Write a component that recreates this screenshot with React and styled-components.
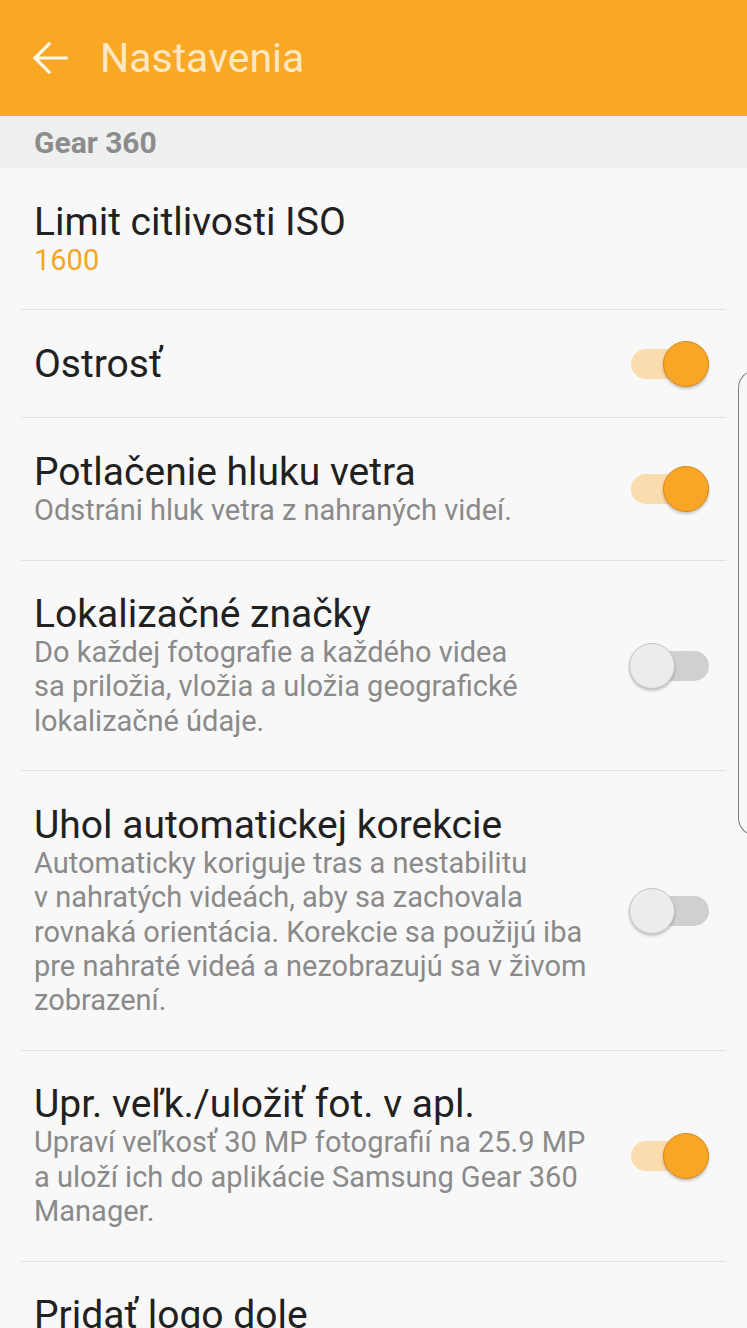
import React from 'react';
import styled, { createGlobalStyle } from 'styled-components';

const GlobalStyle = createGlobalStyle`
  html, body {
    margin: 0;
    padding: 0;
    background: #f8f8f8;
  }
  * {
    box-sizing: border-box;
    font-family: Roboto, "Noto Sans", sans-serif;
  }
`;

const Screen = styled.div`
  position: relative;
  width: 747px;
  height: 1328px;
  overflow: hidden;
  background: #f8f8f8;
`;

const AppBar = styled.header`
  height: 116px;
  background: #f9a825;
  display: flex;
  align-items: center;
  padding-left: 31px;
  gap: 31px;
`;

const Title = styled.h1`
  margin: 0;
  font-size: 41px;
  font-weight: 400;
  color: #fee8c4;
`;

const SectionHeader = styled.div`
  height: 52px;
  background: #eeefef;
  display: flex;
  align-items: center;
  padding-left: 34px;
  font-size: 30px;
  font-weight: 700;
  color: #8c8c8c;
`;

const List = styled.div`
  display: flex;
  flex-direction: column;
`;

const Row = styled.div`
  margin: 0 21px;
  padding: 32.5px 17px 32.5px 13px;
  display: flex;
  align-items: center;
  border-bottom: ${p => (p.last ? 'none' : '1.5px solid #e1e1e1')};
`;

const Texts = styled.div`
  flex: 1;
  display: flex;
  flex-direction: column;
`;

const ItemTitle = styled.div`
  font-size: 39px;
  line-height: 42px;
  color: #212121;
`;

const Sub = styled.div`
  font-size: 29px;
  line-height: 34.3px;
  color: ${p => (p.accent ? '#f5a623' : '#8a8a8a')};
`;

const Track = styled.div`
  position: relative;
  flex: none;
  margin-left: 20px;
  width: 78px;
  height: 30px;
  border-radius: 15px;
  background: ${p => (p.on ? '#fbdcae' : '#d0d0d0')};
`;

const Thumb = styled.div`
  position: absolute;
  top: -8px;
  left: ${p => (p.on ? '32px' : '-2px')};
  width: 46px;
  height: 46px;
  border-radius: 50%;
  background: ${p => (p.on ? '#f9a526' : '#ececec')};
  border: 1.5px solid ${p => (p.on ? '#d9891a' : '#c4c4c4')};
  box-shadow: 0 2px 3px rgba(0, 0, 0, 0.22);
`;

const EdgeHandle = styled.div`
  position: absolute;
  left: 738px;
  top: 370px;
  width: 40px;
  height: 466px;
  border: 1.5px solid #7d7d7d;
  border-right: none;
  border-radius: 18px 0 0 18px;
`;

const Toggle = ({ on }) => (
  <Track on={on ? 1 : 0}>
    <Thumb on={on ? 1 : 0} />
  </Track>
);

const BackArrow = () => (
  <svg width="38" height="38" viewBox="0 0 38 38" fill="none">
    <path d="M35 19H4M18 5L4 19l14 14" stroke="#fff6e8" strokeWidth="3.2" strokeLinecap="square" />
  </svg>
);

const items = [
  { title: 'Limit citlivosti ISO', value: '1600' },
  { title: 'Ostrosť', toggle: true, on: true },
  { title: 'Potlačenie hluku vetra', sub: ['Odstráni hluk vetra z nahraných videí.'], toggle: true, on: true },
  {
    title: 'Lokalizačné značky',
    sub: [
      'Do každej fotografie a každého videa',
      'sa priložia, vložia a uložia geografické',
      'lokalizačné údaje.',
    ],
    toggle: true,
    on: false,
  },
  {
    title: 'Uhol automatickej korekcie',
    sub: [
      'Automaticky koriguje tras a nestabilitu',
      'v nahratých videách, aby sa zachovala',
      'rovnaká orientácia. Korekcie sa použijú iba',
      'pre nahraté videá a nezobrazujú sa v živom',
      'zobrazení.',
    ],
    toggle: true,
    on: false,
  },
  {
    title: 'Upr. veľk./uložiť fot. v apl.',
    sub: [
      'Upraví veľkosť 30 MP fotografií na 25.9 MP',
      'a uloží ich do aplikácie Samsung Gear 360',
      'Manager.',
    ],
    toggle: true,
    on: true,
  },
  { title: 'Pridať logo dole', last: true },
];

export default function App() {
  return (
    <Screen>
      <GlobalStyle />
      <AppBar>
        <BackArrow />
        <Title>Nastavenia</Title>
      </AppBar>
      <SectionHeader>Gear 360</SectionHeader>
      <List>
        {items.map(it => (
          <Row key={it.title} last={it.last ? 1 : 0}>
            <Texts>
              <ItemTitle>{it.title}</ItemTitle>
              {it.value && <Sub accent={1}>{it.value}</Sub>}
              {it.sub && (
                <Sub>
                  {it.sub.map((line, i) => (
                    <React.Fragment key={i}>
                      {i > 0 && <br />}
                      {line}
                    </React.Fragment>
                  ))}
                </Sub>
              )}
            </Texts>
            {it.toggle && <Toggle on={it.on} />}
          </Row>
        ))}
      </List>
      <EdgeHandle />
    </Screen>
  );
}
